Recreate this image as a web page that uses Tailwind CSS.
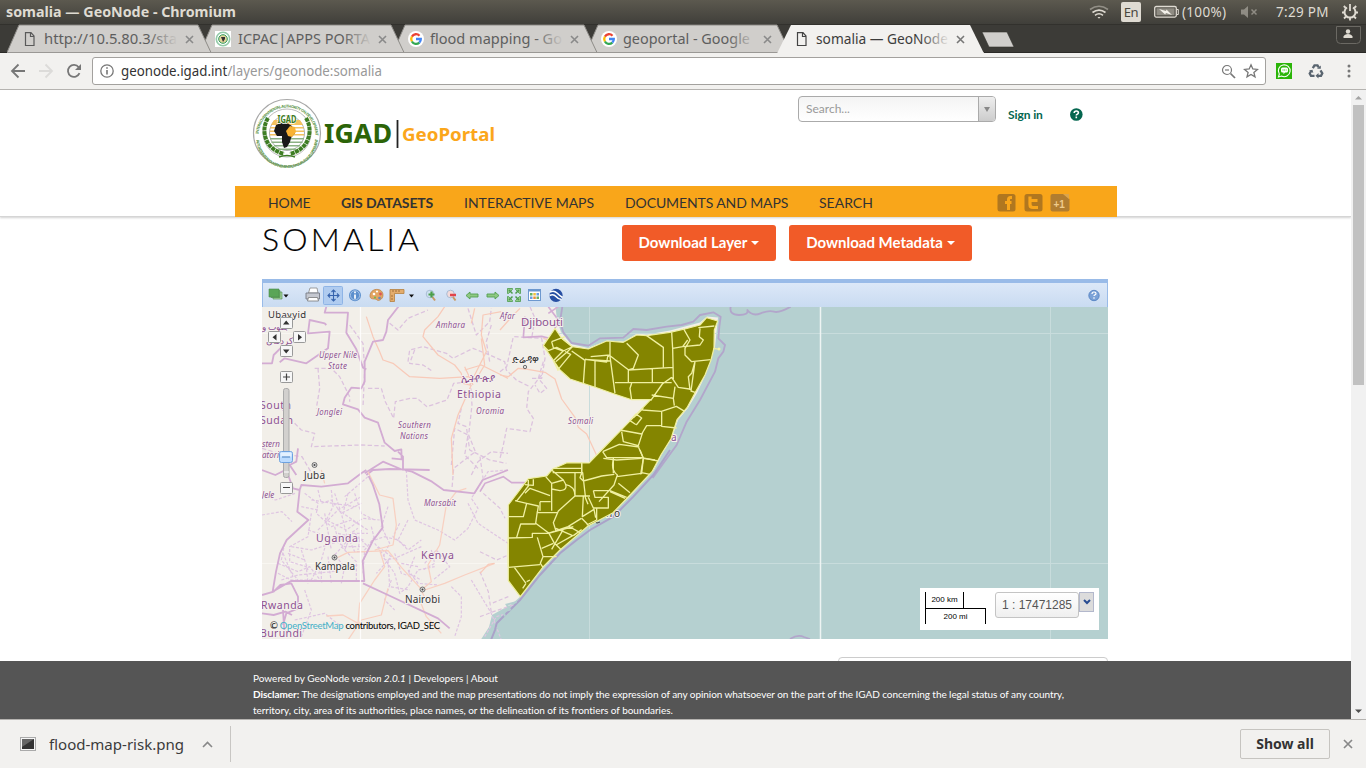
<!DOCTYPE html>
<html lang="en">
<head>
<meta charset="utf-8">
<title>somalia — GeoNode</title>
<script src="https://cdn.jsdelivr.net/npm/@tailwindcss/browser@4"></script>
</head>
<body class="w-[1366px] h-[768px] overflow-hidden flex flex-col bg-white font-['Noto_Sans',sans-serif] text-[14px] whitespace-nowrap">

<!-- system bar -->
<header class="h-6 shrink-0 flex items-center bg-linear-to-b from-[#5c594f] to-[#403f3a] text-[#dfdbd2] pl-[6px]">
  <span class="font-bold text-[13.5px] w-[230px] leading-6"><svg class="block" width="232" height="24"><text x="0" y="17" textLength="230" fill="#dfdbd2" lengthAdjust="spacingAndGlyphs">somalia — GeoNode - Chromium</text></svg></span>
  <div class="ml-auto flex items-center h-6">
    <svg width="20" height="16" viewBox="0 0 20 16" fill="none" stroke="#dfdbd2" stroke-width="1.600"><path d="M1 5.500q9-6.500 18 0" opacity=".45"/><path d="M3.500 8.500q6.500-4.800 13 0M6 11.300q4-3 8 0"/><path d="M8.500 13l1.500 1.800L11.500 13z" fill="#dfdbd2" stroke="none"/></svg>
    <span class="ml-3 w-5 h-5 rounded-xs bg-[#dfdbd2] text-[#4a483f] text-[13px] leading-5 text-center tracking-tight">En</span>
    <svg class="ml-[13px]" width="25" height="14" viewBox="0 0 25 14"><rect x=".7" y="1.500" width="21.600" height="10.600" rx="1.500" fill="none" stroke="#dfdbd2" stroke-width="1.300"/><path d="M22.500 4.500h1.800v5h-1.800" fill="none" stroke="#dfdbd2"/><rect x="2.500" y="3.300" width="18" height="7" fill="#8f8c83"/><path d="M5 4l7 2 .5-1.500L18 10l-6-2-.8 1.500z" fill="#f3f1ea"/></svg>
    <span class="ml-[3px] text-[13.5px] w-[46px] tracking-[0.3px]">(100%)</span>
    <svg class="ml-3" width="19" height="14" viewBox="0 0 19 14" opacity=".45"><path d="M1 4.500h3l4-3.500v12L4 9.500H1z" fill="#dfdbd2"/><path d="M11.500 4.500l5 5m0-5l-5 5" stroke="#dfdbd2" stroke-width="1.500"/></svg>
    <span class="ml-[17px] text-[13.5px] w-[53px] tracking-[0.3px]">7:29 PM</span>
    <svg class="ml-[12px] mr-[7px]" width="18" height="18" viewBox="0 0 18 18" fill="none" stroke="#dfdbd2"><path d="M6 4.500a5.500 5.500 0 1 0 6 0" stroke-width="2"/><path d="M9 1v7M2.800 3l2 2M15.200 3l-2 2M1 9.500h2.500M14.500 9.500H17M3 15.500l2-2M15 15.500l-2-2M9 15v2.500" stroke-width="1.800"/></svg>
  </div>
</header>

<!-- tab strip -->
<div class="relative h-[29px] shrink-0 bg-[#3c3b37]">
  <svg class="absolute inset-0" width="1366" height="29" viewBox="0 24 1366 29">
    <path d="M0 24.500h1366" stroke="#32312d"/>
    <g fill="#d0cecb" stroke="#8e8c88">
      <path d="M586 52.500l12-27.500h179l13 27.500z"/><path d="M393 52.500l12-27.500h179l13 27.500z"/><path d="M200 52.500l12-27.500h179l13 27.500z"/><path d="M7 52.500l12-27.500h179l13 27.500z"/>
    </g>
    <path d="M0 52.500h1366" stroke="#9a9895"/><path d="M0 52.500h7M984 52.500h382" stroke="#2b2a27"/>
    <path d="M777 53.500l14-28.500h179l14 28.500z" fill="#f2f1ef"/>
    <path d="M982 32h25l7 15h-25z" fill="#d0cecb" stroke="#33322e" stroke-width=".6"/>
    <path d="M1336.500 26.500v13q0 4 4 4h16q4 0 4-4v-13z" fill="none" stroke="#6b6963"/>
    <path d="M1343.500 38v-1.500q1-2.500 4.500-2.500t4.500 2.500v1.500z" fill="#dfdbd2"/><circle cx="1348" cy="31.500" r="2.200" fill="#dfdbd2"/>
  </svg>
  <div class="relative flex h-[29px] pl-[22px] text-[14px] text-[#5d5d5d]">
    <div class="w-[193px] flex items-center gap-[8px] pt-px"><svg width="14" height="16" viewBox="0 0 14 16" fill="none" stroke="#5a5a5a" stroke-width="1.200"><path d="M3.500 1.700h5.500l3 3.300v9.500H3.500zM8.500 2v3.500H12"/></svg>
      <svg width="134" height="24"><text x="0" y="17" textLength="133" lengthAdjust="spacingAndGlyphs" fill="url(#fade)">http://10.5.80.3/sta</text></svg>
      <svg class="-ml-[1px]" width="9" height="9" stroke="#8a8a8a" stroke-width="1.600"><path d="M1 1l7 7m0-7l-7 7"/></svg></div>
    <div class="w-[193px] flex items-center gap-[7px] pt-px"><svg width="16" height="16" viewBox="0 0 16 16"><path d="M0 0h16v16H0z" fill="#fff"/><circle cx="8" cy="8" r="6.700" fill="none" stroke="#93cba9" stroke-width="1.600"/><circle cx="8" cy="8" r="4.300" fill="#e3d49a" stroke="#2c9c5d"/><path d="M6 6h4v2L8 11z" fill="#333"/></svg>
      <svg width="134" height="24"><text x="0" y="17" textLength="132" lengthAdjust="spacingAndGlyphs" fill="url(#fade)">ICPAC|APPS PORTA</text></svg>
      <svg class="-ml-[1px]" width="9" height="9" stroke="#8a8a8a" stroke-width="1.600"><path d="M1 1l7 7m0-7l-7 7"/></svg></div>
    <div class="w-[193px] flex items-center gap-[6px] pt-px"><svg width="16" height="16" viewBox="0 0 16 16"><use href="#goog"/></svg>
      <svg width="134" height="24"><text x="0" y="17" textLength="132" lengthAdjust="spacingAndGlyphs" fill="url(#fade)">flood mapping - Go</text></svg>
      <svg width="9" height="9" stroke="#8a8a8a" stroke-width="1.600"><path d="M1 1l7 7m0-7l-7 7"/></svg></div>
    <div class="w-[193px] flex items-center gap-[6px] pt-px"><svg width="16" height="16" viewBox="0 0 16 16"><use href="#goog"/></svg>
      <svg width="134" height="24"><text x="0" y="17" textLength="127" lengthAdjust="spacingAndGlyphs" fill="url(#fade)">geoportal - Google</text></svg>
      <svg width="9" height="9" stroke="#8a8a8a" stroke-width="1.600"><path d="M1 1l7 7m0-7l-7 7"/></svg></div>
    <div class="w-[193px] flex items-center gap-[8px] pt-px"><svg width="14" height="16" viewBox="0 0 14 16" fill="none" stroke="#444" stroke-width="1.200"><path d="M3.500 1.700h5.500l3 3.300v9.500H3.500zM8.500 2v3.500H12"/></svg>
      <svg width="134" height="24"><text x="0" y="17" textLength="132" lengthAdjust="spacingAndGlyphs" fill="url(#fadeDark)">somalia — GeoNode</text></svg>
      <svg class="-ml-[2px]" width="9" height="9" stroke="#777" stroke-width="1.600"><path d="M1 1l7 7m0-7l-7 7"/></svg></div>
  </div>
  <svg class="absolute" width="0" height="0"><defs>
    <linearGradient id="fade" gradientUnits="userSpaceOnUse" x1="0" x2="134" y1="0" y2="0"><stop offset=".78" stop-color="#5d5d5d"/><stop offset="1" stop-color="#5d5d5d" stop-opacity="0"/></linearGradient>
    <linearGradient id="fadeDark" gradientUnits="userSpaceOnUse" x1="0" x2="134" y1="0" y2="0"><stop offset=".78" stop-color="#3b3b3b"/><stop offset="1" stop-color="#3b3b3b" stop-opacity="0"/></linearGradient>
    <g id="goog"><circle cx="8" cy="8" r="8" fill="#fff"/><g fill="none" stroke-width="2.300"><path d="M3.900 5.600A4.800 4.800 0 0 1 11.500 4.700" stroke="#ea4335"/><path d="M3.900 5.600a4.800 4.800 0 0 0 0 4.900" stroke="#fbbc05"/><path d="M3.900 10.500a4.800 4.800 0 0 0 7.400 1.100" stroke="#34a853"/><path d="M11.300 11.600A4.800 4.800 0 0 0 12.800 8H8" stroke="#4285f4"/></g></g>
  </defs></svg>
</div>

<!-- toolbar -->
<div class="h-[37px] shrink-0 bg-[#f2f1ef] border-b border-[#b5b3b0] flex items-center pl-[10px]">
  <svg width="16" height="16" viewBox="0 0 16 16" fill="none" stroke="#777" stroke-width="1.800"><path d="M15 8H2M8.500 1.500L2 8l6.500 6.500"/></svg>
  <svg class="ml-3" width="16" height="16" viewBox="0 0 16 16" fill="none" stroke="#dcdbd9" stroke-width="1.800"><path d="M1 8h13M7.500 1.500L14 8l-6.500 6.500"/></svg>
  <svg class="ml-3" width="16" height="16" viewBox="0 0 16 16" fill="none" stroke="#777" stroke-width="1.800"><path d="M13.500 10.200A6 6 0 1 1 12.700 4.200"/><path d="M15 1v6H9z" fill="#777" stroke="none"/></svg>
  <div class="ml-[10px] w-[1174px] h-7 rounded-[3px] border border-[#a3a19e] bg-white flex items-center pl-[7px] pr-[6px]">
    <svg width="14" height="14" viewBox="0 0 14 14" fill="none" stroke="#777" stroke-width="1.300"><circle cx="7" cy="7" r="6.200"/><path d="M7 6v4.500M7 3.300v1.500" stroke-width="1.600"/></svg>
    <svg class="ml-[7px]" width="270" height="24" font-size="14"><text x="0" y="17" textLength="261" lengthAdjust="spacingAndGlyphs" fill="#999"><tspan fill="#333">geonode.igad.int</tspan>/layers/geonode:somalia</text></svg>
    <svg class="ml-auto" width="15" height="15" viewBox="0 0 15 15" fill="none" stroke="#777" stroke-width="1.200"><circle cx="6" cy="6" r="4.500"/><path d="M4 6h4"/><path d="M9.500 9.500L14 14" stroke-width="1.700"/></svg>
    <svg class="ml-[7px]" width="16" height="16" viewBox="0 0 16 16" fill="none" stroke="#777" stroke-width="1.300"><path d="M8 1.800l1.800 4.200 4.600.4-3.500 3 1.100 4.500L8 11.500l-4 2.400 1.100-4.500-3.500-3 4.600-.4z"/></svg>
  </div>
  <svg class="ml-[10px]" width="16" height="16" viewBox="0 0 16 16"><path d="M0 0h16v16H0z" fill="#2bb508"/><path d="M2.500 14l.8-3a5.900 5.900 0 1 1 2.200 2z" fill="none" stroke="#fff" stroke-width="1.100"/><path d="M6.500 4.500h4q1.500 0 1.500 1.500v2q0 1.500-1.500 1.500H9L7.500 11.200V9.500h-1Q5 9.500 5 8V6q0-1.500 1.500-1.500z" fill="#fff"/><path d="M6.500 7h4" stroke="#2bb508" stroke-dasharray="1 .7"/></svg>
  <svg class="ml-4" width="16" height="16" viewBox="0 0 16 16" fill="none" stroke="#5a6570" stroke-width="2.300"><path d="M4.800 5.200L6.500 2.300h3l1.300 2.200M12.500 7.300l1.800 3-1.300 2.500H9.500M6.500 12.800H3L1.700 10.500l1.600-2.700"/><path d="M9 5.700h3.800V2.500zM10.500 10v5.500L7.500 12.800zM1 7.500l3.500-.7.800 3.200z" fill="#5a6570" stroke="none"/></svg>
  <svg class="ml-[22px]" width="6" height="14" viewBox="0 0 6 14" fill="#777"><circle cx="3" cy="2" r="1.500"/><circle cx="3" cy="7" r="1.500"/><circle cx="3" cy="12" r="1.500"/></svg>
</div>

<!-- page viewport -->
<main class="flex h-[629px] shrink-0 font-['Lato',sans-serif]">
  <div class="w-[1351px] flex flex-col overflow-hidden">
    <div class="h-[127px] shrink-0 border-b border-[#d5d5d5] shadow-[0_1px_2px_rgba(0,0,0,.18)] pl-[235px] z-10">
      <div class="h-24 w-[882px] flex">
        <svg class="ml-[17px] mt-[8px]" width="245" height="71" viewBox="252 98 245 71" font-family="Noto Sans" font-weight="700">
          <circle cx="287" cy="133" r="33.500" fill="#fff" stroke="#a8a8a8" stroke-width="1.200"/>
          <circle cx="287" cy="133" r="24" fill="none" stroke="#aaa" stroke-width=".8"/>
          <path id="ring" d="M258.500 136a28.500 28.500 0 1 1 57 0" fill="none"/>
          <path id="ringLow" d="M256 137a31 31 0 0 0 62 0" fill="none"/>
          <g font-size="3.900" fill="#5d9649"><text><textPath href="#ring" textLength="87" startOffset="2">INTERGOVERNMENTAL AUTHORITY ON DEVELOPMENT</textPath></text><text><textPath href="#ringLow" textLength="92" startOffset="3">AUTORITE INTERGOUVERNEMENTALE POUR LE DEVELOPPEMENT</textPath></text></g>
          <circle cx="287" cy="133" r="17.500" fill="none" stroke="#999" stroke-width=".8"/>
          <g fill="none" stroke="#3e7d24"><path d="M268 118Q262 128 266 139T284 154M306 118Q312 128 308 139T290 154" stroke-width="4" stroke-dasharray="4 .6"/><path d="M279 157q8-3 16 0" stroke-width="1.500"/></g>
          <path d="M274 120l-3 5h32l-3-5zM270.500 127h33v1.500h-33zM270 130.500h34v1.500h-34zM270 134h34v1.500h-34z" fill="#f4c25e"/>
          <path d="M270 138h34v1.500h-34zM271.500 141.500h31v1.500h-31zM274 145h26v1.500h-26zM278 148.500h18v1.500h-18z" fill="#8cb184"/>
          <path d="M276 125l5-2h6l5 3 1 3 2 4-4 5-1 4-3 5-3 1-2-6 0-6h-5l-3-5z" fill="#191919"/><path d="M286 131l4-5 5 1 1 5-4 5-4-1z" fill="#f9b233"/>
          <text x="277.500" y="123" font-size="10.500" textLength="19" lengthAdjust="spacingAndGlyphs" fill="#3c7a1d" stroke="#fff" stroke-width="1.500" paint-order="stroke">IGAD</text>
          <text x="324" y="143" font-size="26.500" textLength="68" lengthAdjust="spacingAndGlyphs" fill="#2c6408">IGAD</text>
          <path d="M397.500 120v28" stroke="#222" stroke-width="1.800"/>
          <text x="402" y="141" font-size="18.500" textLength="93" lengthAdjust="spacingAndGlyphs" fill="#fba61b">GeoPortal</text>
        </svg>
        <div class="ml-[301px] mt-[6px] h-[26px] w-[198px] rounded border border-[#aaa] bg-linear-to-b from-[#f4f4f4] to-white flex overflow-hidden">
          <span class="flex-1 pl-[7px] text-[12px] leading-6 text-[#999]">Search...</span>
          <span class="w-[17px] border-l border-[#aaa] bg-linear-to-b from-[#eee] to-[#ccc] flex items-center justify-center"><svg width="7" height="5"><path d="M0 0h6L3 5z" fill="#888"/></svg></span>
        </div>
        <span class="ml-[12px] mt-[17px] text-[12px] leading-4 font-bold text-[#04664f] w-[35px] tracking-[-0.1px]">Sign in</span>
        <svg class="ml-[27px] mt-[18px]" width="13" height="13" viewBox="0 0 13 13"><circle cx="6.300" cy="6.500" r="6.300" fill="#04664f"/><path d="M4.200 5q0-2 2.100-2t2.100 1.700q0 1-1.200 1.500-.9.300-.9 1.200M6.300 8.500v1.800" fill="none" stroke="#fff" stroke-width="1.600"/></svg>
      </div>
      <nav class="h-[31px] w-[882px] bg-[#f9a61a] flex items-center text-[14px] text-[#333]">
        <span class="ml-[33px] w-[73px] mt-[2px] tracking-[-0.1px]">HOME</span><span class="w-[123px] mt-[2px] font-bold tracking-[-0.1px]">GIS DATASETS</span><span class="w-[161px] mt-[2px]">INTERACTIVE MAPS</span><span class="w-[194px] mt-[2px] tracking-[-0.1px]">DOCUMENTS AND MAPS</span><span class="w-[178px] mt-[2px]">SEARCH</span>
        <svg class="mt-[3px]" width="74" height="20" viewBox="0 0 74 20"><rect x="0.500" y="1" width="18" height="17.500" rx="2.500" fill="#b0771f"/><rect x="27.500" y="1" width="18" height="17.500" rx="2.500" fill="#b0771f"/><path d="M53.500 3q0-2 2-2h11l6 5v10.500q0 2-2 2h-15q-2 0-2-2z" fill="#b17d30"/><path d="M66 1h6v5z" fill="#dba54c"/><path d="M15 4.500h-1.500q-2 0-2 2V17M8 9.500h6.500" fill="none" stroke="#f9a61a" stroke-width="3"/><path d="M33 3.500v8q0 3 3 3h5M33 7.500h7.500" fill="none" stroke="#f9a61a" stroke-width="3.200"/><text x="56.500" y="15" font-family="Liberation Sans" font-size="10" font-weight="700" fill="#efcb8c">+1</text></svg>
      </nav>
    </div>

    <section class="h-[444px] shrink-0 pl-[262px]">
      <div class="flex h-[62px]">
        <h1 class="w-[360px] pt-[5px] font-light text-[32px] leading-[38px] text-black"><svg width="170" height="38" class="block"><text x="0" y="28.500" textLength="157" fill="#000" stroke="#000" stroke-width=".2">SOMALIA</text></svg></h1>
        <div class="mt-2 h-9 w-[154px] rounded-[3px] bg-[#f15b28] text-white font-bold text-[15px] pb-px flex items-center justify-center gap-1">Download Layer<svg width="8" height="4"><path d="M0 0h8L4 4z" fill="#fff"/></svg></div>
        <div class="ml-[13px] mt-2 h-9 w-[183px] rounded-[3px] bg-[#f15b28] text-white font-bold text-[15px] pb-px flex items-center justify-center gap-1">Download Metadata<svg width="8" height="4"><path d="M0 0h8L4 4z" fill="#fff"/></svg></div>
      </div>

      <!-- map panel -->
      <div class="w-[846px]">
        <div class="h-[28px] border-t-[4px] border-[#99bbe8] bg-linear-to-b from-[#dce8f8] to-[#c9dbf1]">
          <svg class="block" width="846" height="24" viewBox="262 283 846 24">
            <path d="M262.500 283v24M1107.500 283v24" stroke="#99bbe8"/>
            <g stroke="#4b8a4b" stroke-width=".6"><path d="M273 292h9v7h-9z" fill="#a5d39c"/><path d="M271 290.500h9v7h-9z" fill="#74b56d"/><path d="M269 289h10v8h-10z" fill="#5aa557"/></g>
            <path d="M283.500 294.500h5l-2.500 3zM409 294.500h5l-2.500 3z" fill="#111"/>
            <g><path d="M308.500 293l1.500-5h7l1 5z" fill="#fff" stroke="#888" stroke-width=".8"/><path d="M306 293h13.500v6H306z" fill="#c5c8d0" stroke="#777b86" stroke-width=".9"/><path d="M308.500 297.500h9l1 3.500h-11z" fill="#fff" stroke="#777" stroke-width=".8"/></g>
            <rect x="323.500" y="286.500" width="19" height="18" rx="1" fill="#b0ccf0" stroke="#8eb4e6"/>
            <path d="M333.500 290v11M328 295.500h11M331.500 292l2-2 2 2M331.500 299l2 2 2-2M330 293.500l-2 2 2 2M337 293.500l2 2-2 2" fill="none" stroke="#3764ae" stroke-width="1.100"/>
            <circle cx="355" cy="295.300" r="6" fill="#5c8fcd"/><circle cx="355" cy="295.300" r="4.600" fill="none" stroke="#bed4ef" stroke-width=".7"/><path d="M355 294.500v4.300M355 291.500v1.700" stroke="#fff" stroke-width="1.700"/>
            <path d="M370 296c0-5 5-8 10-6 4 2 4 8 0 10-3 1.500-3-1-5-1s-5 0-5-3z" fill="#e2a563" stroke="#bb8044" stroke-width=".7"/><g fill="#fff"><circle cx="374" cy="294" r="1.300"/><circle cx="377" cy="291.500" r="1.100"/></g><circle cx="380.500" cy="294" r="1.400" fill="#d55"/><circle cx="379.500" cy="298" r="1.300" fill="#68b"/><circle cx="375" cy="297.500" r="1" fill="#6b5"/>
            <path d="M390 289.500h14v4h-9.500v8H390z" fill="#e3ac6c" stroke="#b5803f" stroke-width=".8"/><path d="M393 290v2M396 290v2M399 290v2M391 296h2M391 299h2" stroke="#855320" stroke-width=".7"/>
            <circle cx="430" cy="294" r="3.800" fill="#cfe2f1" stroke="#a9bdd5"/><path d="M432.500 297l2.500 3.500" stroke="#c89a66" stroke-width="2"/><path d="M431.500 291.500v6M428.500 294.500h6" stroke="#4b9e4a" stroke-width="2.200"/>
            <g transform="translate(20.500)"><circle cx="430" cy="294" r="3.800" fill="#f3dada" stroke="#a9bdd5"/><path d="M432.500 297l2.500 3.500" stroke="#c89a66" stroke-width="2"/><path d="M429.500 295h6" stroke="#e1444b" stroke-width="2.500"/></g>
            <path d="M466 295.500l4-3.500v2h8v3h-8v2z" fill="#8fc983" stroke="#539f50" stroke-width=".9"/>
            <path d="M499 295.500l-4-3.500v2h-8v3h8v2z" fill="#8fc983" stroke="#539f50" stroke-width=".9"/>
            <g fill="#93c98a" stroke="#4c9c4c" stroke-width=".8"><path d="M507.500 288.500h5v1l-4 4h-1zM520.500 288.500h-5v1l4 4h1zM507.500 301.500h5v-1l-4-4h-1zM520.500 301.500h-5v-1l4-4h1z"/><path d="M509 290l3.500 3.500M519 290l-3.500 3.500M509 300l3.500-3.500M519 300l-3.500-3.500" stroke-width="1.500"/></g>
            <rect x="528.500" y="289.500" width="12" height="11" fill="#fff" stroke="#6d98cf"/><path d="M528 290.500h13" stroke="#6d98cf" stroke-width="2"/><path d="M530 293h2.500v2.500H530zM536.500 296.500h2.500v2.500h-2.500z" fill="#69b063"/><path d="M533.300 293h2.500v2.500h-2.500z" fill="#f0c03c"/><path d="M536.500 293h2.500v2.500h-2.500zM530 296.500h2.500v2.500H530z" fill="#6a9ce0"/><path d="M533.300 296.500h2.500v2.500h-2.500z" fill="#e98f3b"/>
            <circle cx="556" cy="295.300" r="6.600" fill="#274fa3"/><path d="M550 292q4-2 7 1t5.500 4.500M549.500 295.500q4-2 6.500 1t5.500 3" fill="none" stroke="#fff" stroke-width="1.500"/>
            <circle cx="1094" cy="295.500" r="5.200" fill="#7ba2d7" stroke="#4d7cbf" stroke-width=".8"/><path d="M1092 294q0-2 2-2t2 1.600q0 .9-1.100 1.300-.9.300-.9 1.100M1094 297.300v1.500" fill="none" stroke="#fff" stroke-width="1.200"/>
          </svg>
        </div>
        <div class="relative h-[332px] overflow-hidden">
          <svg class="block" width="846" height="332" viewBox="262 307 846 332">
            <path d="M262 307h846v332H262z" fill="#f2efe9"/>
            <path d="M555.500 307L557 320l4 12 10 12 17 4 19-7.500 17 1 13-8 10 1 23-4 30-8 7-6 11 1-3 29.500-5 14-5 15-8 17-9 15-10 12-6 18-10 16-8 16-20 22-19 19-26 14-28 24-17 17-23 30-9 8-20 11-3 12-9 14H1108V307z" fill="#b5d0d0"/>
            <path d="M482 641l7-13h619v13z" fill="#b5d0d0"/>
            <path d="M589.500 307v332M1050.500 307v332M556 333.500h552M547 563.500h561" stroke="#c8dcdc" stroke-width="1"/>
            <path d="M262 333.500h294M262 563.500h250" stroke="#f8f6f1"/>

            <!-- administrative boundaries and roads, west -->
            <g transform="translate(258 305) scale(.33333)" fill="none" stroke-linejoin="round">
              <g stroke="#dcc2de" stroke-width="3.800" stroke-dasharray="13 7">
                <path d="M275 60l40 55 5 80-5 110M170 190l50 0 25 25 30 60 0 15M70 310l30 35 30 30 40 10-10 40 150-5 70 3M330 250h40l12 40 15 30 10 20 5-50 45-10 20 0 30 25 60-20 20-50 50-5 5 70-10 90 20 50-65 50-5 60M450 170l5-35 40-10 70 20 20 15 60-30 50 20 45 20 5 25 30 30 40 20M395 55l25 20 30-35 60-25M630 10l25 80 40-40 5-40M610 310l-10 45 25 10 10 70 60 30 50 10M470 135l-15 40 40 5 30 20M580 480l10-110 40 20-10 60 40 40"/>
                <path d="M12 430l50 15 70 10 35 60M180 190l5 60-10 60M640 510l20-40 40-30 50 5M700 60l-15 50 10 60"/>
              </g>
              <g stroke="#f8cab9" stroke-width="3.800"><path d="M325 35l20 60 20 45 10 25 30 10 50 40 90 5 90-5 20 15M560 5l-20 30-40 40-5 20 45 55 50 30 20 25 5 30 20 5 50-100-15-50 5-60 55-10M620 195l50-15 60 30 20 10M640 240l-40 90-20 70 5 110M620 185l25 55M650 230l30-50-10-80M650 10l-10 45"/></g>
              <g stroke="#d3acd3" stroke-width="5.500"><path d="M205 5l-5 18h70l-5 60 30 50 20 55 10 5M425 0l-35 45-5 35-10 25-30 5-25 60 0 60-10 20-30-2-20 30-5 20 45 15 20 25 40 15 20 60 30 25 20-5 1 30-30-3M205 60l-5-5-45-10-5 40 65-5-5 50-65 45-65-15-15 12M12 175h30l5-25 20-20 25 25M420 440l15 15v40l-60-25-55 35M120 430l-5 40-20 10 20 30M325 510l20-15 50-3 120 3"/></g>
            </g>
            <g transform="translate(258 470) scale(.33333)" fill="none" stroke-linejoin="round">
              <g stroke="#dfc5e2" stroke-width="3.600" stroke-dasharray="9 5">
                <path d="M140 70l40 30-5 30 45 40 60-20 50 30M180 60l10 40 30-10 30 40 60-30M220 60l5 50-20 40 60 30 50-35 50 5M160 130l-10 70-55 30 0 45 50 15 5 50M230 70l20 60 20 80-40 45 30 35-10 50M150 180l60 20-20 70-30 60M100 230l60 10 80-25 60-40M60 280l60 25 35-15 40 50M80 220l-10 50 50 60M240 190l80 20M250 230l45 45 0 60M270 70l-15 60 60 40M70 330l50-15 100-10 80-20M350 200l-30 40-5 70M280 300l-50-20-50 25M160 90l130 20M180 180l60-60 70-40M130 240l20 60M200 130l20 110M290 70l20 60 40 20M130 110l50 10M260 240l20-50 50 0M210 200l50 30 60 0M270 200l20 45 30 0M210 260l10 80M60 310l40 20 80 0M90 250l50 20M290 190l40 40M310 180l-10 60M230 170l10 40M190 290l0 40M75 250l30 70"/>
                <path d="M445 0l5 90 20 60 70 30 50 30 40-35 30-60-20-30 50-80 60-5M630 100l30 60 90 60M390 110l-20 60 25 50-20 40 35 50 15 60 25-20 30-50 50-10M450 150l-30 60 30 30 40-30M490 230l-80 35-30 5M390 270l5 80 60 10M500 280l35-40 40 50-50 40M450 300l30 40 60 5M580 350l30 30 0 60-20 60M640 330l60 100 30 80M680 500l35-60 35-10M400 330l-20 60 30 30M12 135l60-10 30 30M12 70l40 20 60-20M110 450l90-20 50 40M140 360l20 60-30 80"/>
                <path d="M330 20l-70 60M340 170l10 40 30-10M425 160l-20 40 40 30M360 230l40 30-45 50M470 260l-20 50 40 20M520 240l10 40-35 20M350 220l30 40M410 250l20 60 30 10M380 200l40 10M430 280l50 10"/>
              </g>
              <g stroke="#f8d0c1" stroke-width="3.800"><path d="M190 0l10 40M330 5l35 70 40 10 10 80-10 60-55 15M240 262l30-15 120-5 40 50 55 60 15 30M490 360l30-25-10-50 35-60 20-120 30-40 30-10M500 360l60-20 60-25 90-35M365 240l15 50-30 40-45 70-5 60-45-25-50 3M485 390l20 50 45 50M270 510l40-60 60-15 20-80"/></g>
              <g stroke="#d3acd3" stroke-width="5.500"><path d="M12 0l40 15 30-15M85 0l20 55 20 5-7 65 33 25-65 60-20 40-12 55-10 60 55-32h220l-5-60 30-60 30-40-10-70-20-60-12-25M125 60l5-15 60 5 80-10 40-30 15-10M440 0l22 5 60 30 35 25 92 10 25-40 76-30M315 340l75 35 150 70 35 30M12 375l35-10 20-20 33-5 20 40 0 35-35 15-10 35M12 430l35 5 35-10 20 10M75 420l5 80"/></g>
            </g>
            <!-- Djibouti and Somali region -->
            <g transform="translate(500 305) scale(.33333)" fill="none" stroke-linejoin="round">
              <g stroke="#dcc2de" stroke-width="3.800" stroke-dasharray="13 7"><path d="M0 200l20-15 20-90 85 5 10 60-10 60-30 0M125 210l-40 50-5 50 20 30-10 40-70-10-10 50-10 40M130 170l-15 50 25 30-20 15-15-25M90 5l15 35-10 60"/></g>
              <path d="M0 210l25 5 30-25 20 2 60 10 30 20 20 60 40 55 10 30 25 20 35 75M0 75l40-45 20-20M130 100l15 5" stroke="#f8cab9" stroke-width="3.800"/>
              <path d="M75 35l-5 62 55-3 20 5M145 5l30 40-10 25M175 5l-30 20" stroke="#d3acd3" stroke-width="5"/>
              <path d="M187 5l-7 45 10 32 25 32 50 8 35-22 70-2 30-26 40 3 60-10 45-5 35-10 20-20 40-8 22 13-4 30-3 35 20 20-5 20-15 20-10 40-45 85-40 65-30 70-40 55-32 44M692 5q-5 25 25 25t25-15q15 20 40 10t40-5 50-15" stroke="#b2a6cb" stroke-width="5.500"/>
            </g>
            <g transform="translate(480 450) scale(.33333)" fill="none">
              <path d="M570 0l-50 75-60 65-60 60-70 40-40 30-50 40-60 65-60 75-70 70-5 20-12 30" stroke="#aaa2c9" stroke-width="6"/>
              <path d="M0 125l15-25 55-20 25 18h45" stroke="#d3acd3" stroke-width="5"/>
              <path d="M0 20l10 70M10 130l50 45 15 30M0 305l50 25 35-15M0 365l25 60 10 70M85 440l-50 20M0 500l40-15 60-20" stroke="#dcc2de" stroke-width="3.500" stroke-dasharray="12 7"/><path d="M0 370l25-27 18-3" stroke="#f8cab9" stroke-width="4"/>
              <path d="M110 456l-30 8 10 15-20 5 5 15" stroke="#b5d0d0" stroke-width="6"/>
            </g>
            <path d="M790 639q8-5 14-2l6 2" fill="none" stroke="#b2a6cb" stroke-width="1.800"/>
            <path d="M360.500 307v332" stroke="#fff" stroke-width="1.300" opacity=".85"/><path d="M820.500 307v332" stroke="#eef4f3" stroke-width="1.500"/>

            <g font-family="Noto Sans" fill="#8d5191" stroke="#f5f1ee" stroke-width="2" paint-order="stroke">
              <g font-size="8" font-style="italic"><text x="436" y="328" textLength="29">Amhara</text><text x="500" y="319" textLength="15">Afar</text><text x="319" y="358" textLength="38">Upper Nile</text><text x="328" y="368.500" textLength="19">State</text><text x="317" y="415" textLength="25">Jonglei</text><text x="398" y="428" textLength="33">Southern</text><text x="400" y="439" textLength="28">Nations</text><text x="476" y="414" textLength="28">Oromia</text><text x="568" y="424" textLength="25">Somali</text><text x="424" y="506" textLength="32">Marsabit</text><text x="262" y="447">stern</text><text x="262" y="458">atoria</text><text x="262" y="498">Jele</text></g>
              <g font-size="10.500" stroke-width="1.800"><text x="521" y="326" textLength="42" lengthAdjust="spacingAndGlyphs">Djibouti</text><text x="457" y="398" textLength="44">Ethiopia</text><text x="260" y="409" textLength="31">South</text><text x="260" y="424" textLength="33">Sudan</text><text x="316" y="542" textLength="42">Uganda</text><text x="421" y="559" textLength="33">Kenya</text><text x="261" y="609" textLength="42">Rwanda</text><text x="260" y="637" textLength="42">Burundi</text></g>
              <text x="461" y="382" font-size="10.500" textLength="35" lengthAdjust="spacingAndGlyphs">ኢትዮጵያ</text>
              <text x="262" y="330" font-size="8.500">جنوب و</text><text x="266" y="344" font-size="8.500">كردفان</text>
              <text x="671" y="441" font-size="10">a</text>
              <g fill="#333" font-size="10"><text x="268" y="318" font-size="9.500" textLength="38">Ubayyid</text><text x="304" y="479" textLength="21">Juba</text><text x="315" y="570" textLength="40">Kampala</text><text x="405" y="603" textLength="35">Nairobi</text><text x="512" y="363" font-size="9.500" textLength="27" lengthAdjust="spacingAndGlyphs">ድሬዳዋ</text><text x="587" y="516.500" textLength="33">disho</text></g>
            </g>
            <path d="M594 519l3 4 3-1" fill="none" stroke="#555" stroke-width="1.200"/>
            <g fill="#ddd" stroke="#555" stroke-width=".8"><circle cx="314.500" cy="465" r="2.500"/><circle cx="334.500" cy="557.500" r="2.500"/><circle cx="422.500" cy="589.500" r="2.500"/><circle cx="525" cy="367" r="1.700"/></g><g fill="#444"><circle cx="314.500" cy="465" r="1"/><circle cx="334.500" cy="557.500" r="1"/><circle cx="422.500" cy="589.500" r="1"/></g>

            <!-- somalia layer -->
            <path d="M555 328.300L543.300 345.700 560 370l10 9 26.700 8.700 18.300 6.600 16.700 5.400h19L589 463l-22-.3-14.300 6.300-6 7-18.400 2.700L508.300 505v75.700l12 16L543 567l17-17 28-24 25-13.300L632 493l20-21.300 9-17 10-16 6-19 10-12 8.500-15.700 9.500-17 6-15 3-12 .3-18 3.400-9-11-3.300-6.700 7.300-15 4-15 3.300-23.300 3.400-10-.7-13.400 7.300-16.600-1.300-18.400 8-16-2.300-10.600-8.400z" fill="#848500" stroke="#eff09f" stroke-width="1.200" stroke-linejoin="round"/>
            <g fill="none" stroke="#f0f0a0" stroke-width="4" stroke-linejoin="round">
              <g transform="translate(500 305) scale(.33333)">
                <path d="M130 122l15 15 25-10 20 10-30 30 15 30M155 110l40-15M155 110l5 18 30 10 25-12M185 100l32 25-15 15-35 30M195 140l17 8-40 48M215 138l40 28-5 70M255 163l75 5M272 155l58-5M330 110v42l-7 3-3 16-65-8M285 165v82M330 152l55 42 0 40M330 155l15 110M345 233l170 0M395 235l-5 15 5 35M385 195l135-8M457 190v45M385 195l15-5 15-40-35-35M440 92l50 35v60M515 82l3 50 2 90M518 130l30-5 15-20M550 70l20 35-15 25 0 20 20 20 57-6M600 70l-2 25 12 10-10 15-50 5M595 68l48-5M585 170l-10 35-10 10 5 40M585 170l-12 88 12 4M515 217l-28 20-35 50M515 217l20 30 33 5M455 270l65 10 5-35M520 280l3 22M427 315l57 4 45-15 25 15M485 319v45l45 5M430 310l-30 28M405 357l-15-10 18-20 17 12-15 20zM360 375l65 12 15-25 45 0M365 380l5 30 45 12 13-40M308 440l50-22 60 8M308 440l12 18 105 0 50 10M415 425l15 35-8 48M340 460l0 45M160 490l85 0v20M245 475v15M640 130l20 3"/>
              </g>
              <g transform="translate(480 450) scale(.33333)">
                <path d="M370 25l40 5 75-5M400 30q-8 30 12 45l-10 30-45 50M480 0l10 25-5 45-75 10M490 25l35 5M415 100l35 28M485 68l25 5M218 68h90l8 70M305 38v30l-5 15 10 10 55-15 38-5M285 70v68h45M316 138v5l8 20M215 60l35 30-35 10-18-20M250 90q20 30-10 32l-25-5M215 100v82M255 103q30 5 30 35l-50 45-15 35 8 25M310 138l-3 62 35-22 5 25M340 122l5 20 40 0v32h-45l-15-32M340 122h50l50 20M390 125l45 20M350 175v35l-30 15M135 130l15-15 60 22M160 88v18l-25-2M145 90v18l-15 20-20 25M105 152l35 8 35 8-3 20h60M180 155h32M180 155v27M140 160l-10 40H85M172 185l-5 35 40 30 15 28 20 20M110 262l12-40h45M85 264l72-2 0-12h47l60-20 40-25M265 228l35 20M228 235l50 22-50 28M205 250l75-20M172 262l17 58-8 20 8 12M185 295l35-15M190 320h40M85 352l95-8M103 352l35 48M138 400l-10 15M85 262v90M305 205l20 20M140 395l10-5M250 238l-35 60M280 257l25-18"/>
              </g>
            </g>
            <circle cx="719" cy="349" r="1.500" fill="#f5f5a8"/>

            <!-- pan and zoom controls -->
            <g fill="#f7f7f7" stroke="#999" stroke-width="1"><rect x="280.500" y="317.500" width="12" height="11" rx="1"/><rect x="268.500" y="331.500" width="12" height="11" rx="1"/><rect x="293.500" y="331.500" width="12" height="11" rx="1"/><rect x="280.500" y="345.500" width="12" height="11" rx="1"/><rect x="280.500" y="371.500" width="12" height="11" rx="1"/><rect x="280.500" y="482.500" width="12" height="11" rx="1"/></g>
            <path d="M283 324.500h6.500l-3.300-4zM283 349.500h6.500l-3.300 4zM276.500 334v6.500l-4-3.300zM298 334v6.500l4-3.300z" fill="#333"/>
            <path d="M283 377h7M286.500 373.500v7M283 487.500h7" stroke="#444" stroke-width="1.200"/>
            <rect x="283.500" y="388.500" width="5.500" height="89" rx="2" fill="#d2d0ce" stroke="#aaa"/>
            <path d="M284 472h5" stroke="#fff"/><rect x="279.500" y="451.500" width="13" height="11" rx="2" fill="#bcdcff" stroke="#6ea2e0"/><path d="M280.500 452.500h11v4h-11z" fill="#e3f1ff"/><path d="M282 457h8" stroke="#4b82c0"/>
          </svg>
          <div class="absolute left-2 bottom-[6px] text-[9.5px] leading-[14px] text-black tracking-[-0.26px]">© <span class="text-[#44b0c8]">OpenStreetMap</span> contributors, IGAD_SEC</div>
          <div class="absolute right-[9px] bottom-[9px] w-[179px] h-[42px] bg-white flex font-['Liberation_Sans',sans-serif]">
            <div class="ml-[5px] mt-1 w-[61px] text-[8px] text-black">
              <div class="w-[39px] h-[16px] border-x border-black text-center leading-[15px]">200 km</div>
              <div class="w-[61px] h-[16px] border-t border-x border-black text-center leading-[15px]">200 mi</div>
            </div>
            <div class="ml-[9px] mt-1 w-[84px] h-[26px] rounded-[3px] border border-[#c4c4c4] bg-linear-to-b from-white to-[#efefef] text-[12px] leading-[24px] text-[#555] text-center">1 : 17471285</div>
            <div class="mt-1 w-[15px] h-5 border border-[#b3b8cc] bg-[#dcdcdc] flex justify-center pt-[6px]"><svg width="8" height="6"><path d="M1 1l3 3 3-3" fill="none" stroke="#274b91" stroke-width="2"/></svg></div>
          </div>
        </div>
      </div>
      <div class="ml-[576px] mt-[18px] w-[270px] h-[10px] border border-[#ccc] rounded-[4px]"></div>
    </section>

    <footer class="relative h-[58px] shrink-0 bg-[#555] text-white text-[10px] leading-4 pl-[253px] pt-[9px]">
      <p>Powered by GeoNode <i>version 2.0.1</i> | Developers | About</p>
      <p class="tracking-[-0.066px]"><b>Disclamer:</b> The designations employed and the map presentations do not imply the expression of any opinion whatsoever on the part of the IGAD concerning the legal status of any country,</p>
      <p class="tracking-[-0.04px]">territory, city, area of its authorities, place names, or the delineation of its frontiers of boundaries.</p>
    </footer>
  </div>
  <div class="w-[15px] bg-[#f1f1f1] flex flex-col items-center">
    <svg width="15" height="15"><path d="M4 9.500h7L7.500 6z" fill="#a3a3a3"/></svg>
    <div class="w-[11px] h-[280px] bg-[#c1c1c1]"></div>
    <svg class="mt-auto" width="15" height="15"><path d="M4 5.500h7L7.500 9z" fill="#505050"/></svg>
  </div>
</main>

<!-- download shelf -->
<div class="h-[49px] shrink-0 bg-[#f2f1ef] border-t border-[#b5b3b0] flex items-center text-[#333]">
  <svg class="ml-5" width="16" height="14" viewBox="0 0 16 14"><rect x=".5" y=".5" width="15" height="13" fill="#f6f6f6" stroke="#aaa"/><path d="M2 2h12v10H2z" fill="#333"/><path d="M2 2h12L2 10z" fill="#666"/></svg>
  <svg class="ml-[13px]" width="136" height="24" font-size="15"><text x="0" y="18" textLength="135" lengthAdjust="spacingAndGlyphs" fill="#3b3b3b">flood-map-risk.png</text></svg>
  <svg class="ml-[17px]" width="11" height="7" fill="none" stroke="#888" stroke-width="1.600"><path d="M1 6l4.500-4.500L10 6"/></svg>
  <div class="ml-[17px] w-px h-9 bg-[#c8c6c3]"></div>
  <div class="ml-auto w-[90px] h-[30px] rounded-[2px] border border-[#c6c4c0] font-bold text-[14px] leading-[27px] text-center">Show all</div>
  <svg class="ml-[13px] mr-[13px]" width="10" height="10" stroke="#888" stroke-width="1.700"><path d="M1 1l8 8m0-8L1 9"/></svg>
</div>
</body>
</html>
